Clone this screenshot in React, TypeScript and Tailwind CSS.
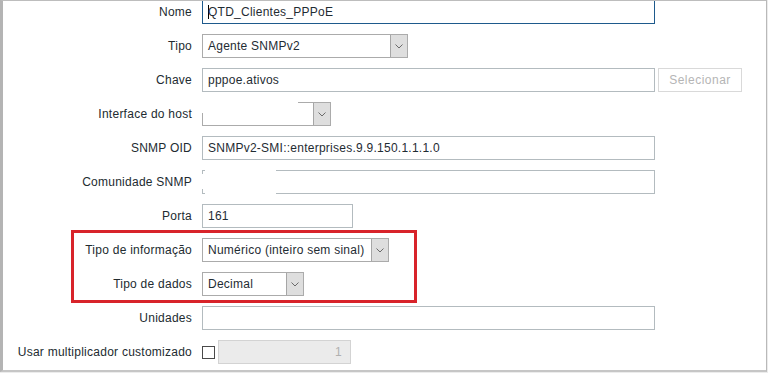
import type { ReactNode } from 'react'

const font = "font-['Liberation_Sans',Arial,sans-serif]"

function Chevron() {
  return (
    <svg width="8" height="5" viewBox="0 0 8 5" fill="none">
      <path d="M0.5 0.5 L4 4 L7.5 0.5" stroke="#6a6a6a" strokeWidth="1" />
    </svg>
  )
}

function Row({ label, children }: { label: string; children: ReactNode }) {
  return (
    <div className="flex items-center h-[24px] mb-[10px]">
      <div className="w-[189px] text-right text-[#222b30] whitespace-nowrap">{label}</div>
      <div className="ml-[10px] flex items-center h-full">{children}</div>
    </div>
  )
}

function Input({ value, width }: { value?: string; width: string }) {
  return (
    <div className={`relative h-[24px] ${width} border border-[#b3bbbf] bg-white flex items-center pl-[5px] text-[#1f2c33]`}>
      {value}
    </div>
  )
}

function Select({ value, width, children }: { value?: string; width: string; children?: ReactNode }) {
  return (
    <div className={`relative h-[24px] ${width} border border-[#ababab] bg-white flex items-center text-[#1f2c33]`}>
      <div className="flex-1 pl-[5px] whitespace-nowrap overflow-hidden">{value}</div>
      <div className="w-[17px] h-full bg-[#dedede] border-l border-[#a6a6a6] flex items-center justify-center">
        <Chevron />
      </div>
      {children}
    </div>
  )
}

export default function App() {
  return (
    <div className={`w-[768px] h-[373px] bg-[#ececec] text-[12px] tracking-[0.25px] ${font}`}>
      <div className="relative w-[767px] h-[372px] bg-white border-l-[3px] border-l-[#b4b4b4] border-t border-t-[#bdbdbd] border-r border-r-[#b9b9b9] border-b-2 border-b-[#c6c6c6] overflow-hidden">
        <div className="mt-[-1px]">
          <Row label="Nome">
            <div className="relative h-[24px] w-[453px] border border-[#1e5a8c] bg-white flex items-center pl-[5px] text-[#1f2c33]">
              <span className="w-px h-[14px] bg-black mr-[-1px]" />
              QTD_Clientes_PPPoE
            </div>
          </Row>
          <Row label="Tipo">
            <Select value="Agente SNMPv2" width="w-[206px]" />
          </Row>
          <Row label="Chave">
            <Input value="pppoe.ativos" width="w-[453px]" />
            <div className="ml-[3px] h-[24px] w-[84px] border border-[#d9d9d9] flex items-center justify-center text-[#b5b5b5] tracking-[0.5px]">
              Selecionar
            </div>
          </Row>
          <Row label="Interface do host">
            <Select width="w-[129px]">
              <div className="absolute left-[-1px] top-[-1px] w-[96px] h-[11px] bg-white" />
            </Select>
          </Row>
          <Row label="SNMP OID">
            <Input value="SNMPv2-SMI::enterprises.9.9.150.1.1.1.0" width="w-[453px]" />
          </Row>
          <Row label="Comunidade SNMP">
            <Input width="w-[453px]" />
            <div className="relative">
              <div className="absolute left-[-450px] top-[-13px] w-[71px] h-[26px] bg-white" />
              <div className="absolute left-[-454px] top-[-8px] w-[3px] h-[15px] bg-white" />
            </div>
          </Row>
          <Row label="Porta">
            <Input value="161" width="w-[151px]" />
          </Row>
          <Row label="Tipo de informação">
            <Select value="Numérico (inteiro sem sinal)" width="w-[187px]" />
          </Row>
          <Row label="Tipo de dados">
            <Select value="Decimal" width="w-[102px]" />
          </Row>
          <Row label="Unidades">
            <Input width="w-[453px]" />
          </Row>
          <Row label="Usar multiplicador customizado">
            <div className="w-[13px] h-[13px] border border-[#4a4a4a] bg-white" />
            <div className="ml-[3px] h-[24px] w-[133px] border border-[#d3d3d3] bg-[#ebebeb] flex items-center justify-end pr-[8px] text-[#b0b0b0]">
              1
            </div>
          </Row>
        </div>
        <div className="absolute left-[68px] top-[229px] w-[346px] h-[73px] border-[3px] border-[#d8232a]" />
      </div>
    </div>
  )
}
